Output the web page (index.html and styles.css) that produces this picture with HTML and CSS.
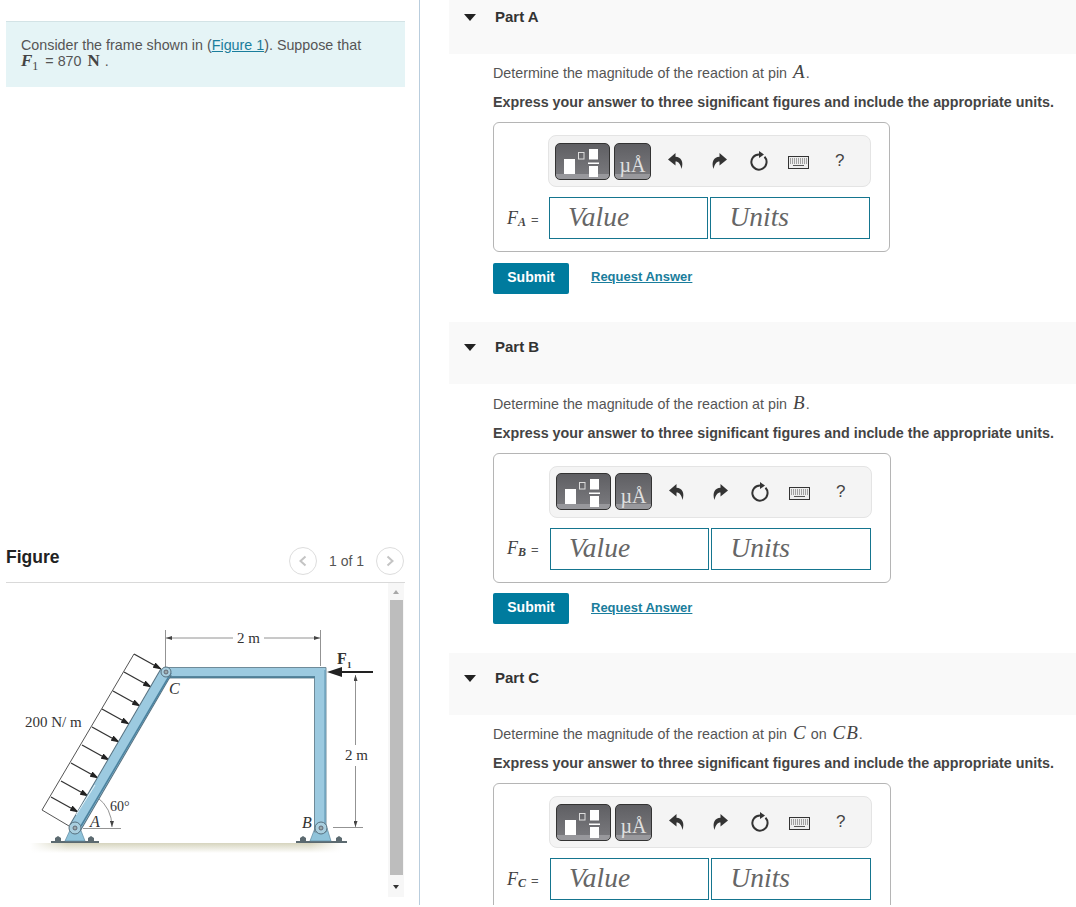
FILE: index.html
```html
<!DOCTYPE html>
<html lang="en">
<head>
    <meta charset="UTF-8">
    <meta name="viewport" content="width=device-width, initial-scale=1.0">
    <title>Frame reactions</title>
    <link rel="stylesheet" href="styles.css">
</head>
<body>

<div class="page">
    <!-- Left column: problem text and figure -->
    <div class="left">
        <div class="intro">
            Consider the frame shown in (<a href="#">Figure 1</a>). Suppose that<br>
            <span class="math">F<sub>1</sub></span> = 870 <span class="unit">N</span> .
        </div>

        <div class="figure-head">
            <h2>Figure</h2>
            <div class="pager">
                <span class="pager-btn">
                    <svg width="10" height="12" viewBox="0 0 10 12"><path d="M7.5 1.5 L2.5 6 L7.5 10.5"/></svg>
                </span>
                <span class="pager-text">1 of 1</span>
                <span class="pager-btn">
                    <svg width="10" height="12" viewBox="0 0 10 12"><path d="M2.5 1.5 L7.5 6 L2.5 10.5"/></svg>
                </span>
            </div>
        </div>

        <div class="figure-panel">
            <!-- viewBox uses page coordinates so it is easy to compare -->
            <svg class="diagram" width="382" height="314" viewBox="6 583 382 314">
                <defs>
                    <linearGradient id="ground" x1="0" y1="0" x2="0" y2="1">
                        <stop offset="0" stop-color="#d6d4be"/>
                        <stop offset="1" stop-color="#ffffff"/>
                    </linearGradient>
                    <linearGradient id="groundFade" x1="0" y1="0" x2="1" y2="0">
                        <stop offset="0" stop-color="#fff" stop-opacity="1"/>
                        <stop offset="0.12" stop-color="#fff" stop-opacity="0"/>
                        <stop offset="0.9" stop-color="#fff" stop-opacity="0"/>
                        <stop offset="1" stop-color="#fff" stop-opacity="1"/>
                    </linearGradient>
                    <marker id="tip" markerWidth="9" markerHeight="6" refX="8" refY="3" orient="auto" markerUnits="userSpaceOnUse">
                        <path d="M0 0 L9 3 L0 6 Z" fill="#222"/>
                    </marker>
                    <marker id="dim" markerWidth="6" markerHeight="4" refX="6" refY="2" orient="auto-start-reverse" markerUnits="userSpaceOnUse">
                        <path d="M0 0 L6 2 L0 4 Z" fill="#444"/>
                    </marker>
                </defs>

                <!-- ground -->
                <rect x="30" y="843" width="312" height="10" fill="url(#ground)"/>
                <rect x="30" y="843" width="312" height="10" fill="url(#groundFade)"/>

                <!-- distributed load -->
                <g stroke="#333" stroke-width="1.3" fill="none" marker-end="url(#tip)">
                    <path d="M134 654 L161 669"/>
                    <path d="M124 672 L151 687"/>
                    <path d="M113 691 L140 706"/>
                    <path d="M102 709 L129 724"/>
                    <path d="M92 727 L119 742"/>
                    <path d="M82 745 L109 760"/>
                    <path d="M71 763 L98 778"/>
                    <path d="M61 781 L88 796"/>
                    <path d="M51 797 L78 812"/>
                </g>
                <path d="M134 654 L42 810 L69 826" stroke="#555" stroke-width="1" fill="none"/>

                <!-- dimensions -->
                <g stroke="#777" stroke-width="0.8" fill="none">
                    <path d="M165.5 630 V667"/>
                    <path d="M320.5 630 V666"/>
                    <path d="M166 638 H233" marker-start="url(#dim)"/>
                    <path d="M264 638 H320" marker-end="url(#dim)"/>
                    <path d="M355.5 675 V745" marker-start="url(#dim)"/>
                    <path d="M355.5 766 V827" marker-end="url(#dim)"/>
                    <path d="M333 827.5 H363"/>
                    <path d="M83 828.5 H121"/>
                    <path d="M97 797 A38 38 0 0 1 112 827" marker-end="url(#dim)"/>
                </g>

                <!-- bases -->
                <g fill="#5c6a70">
                    <path d="M55 841 V838 L58 836 L61 838 V841 Z"/>
                    <path d="M88 841 V838 L91 836 L94 838 V841 Z"/>
                    <path d="M300 841 V838 L303 836 L306 838 V841 Z"/>
                    <path d="M336 841 V838 L339 836 L342 838 V841 Z"/>
                    <rect x="51" y="841" width="48" height="2"/>
                    <rect x="296" y="841" width="51" height="2"/>
                </g>
                <path d="M71 828 H80 L85 841 H65 Z" fill="#8fc3da" stroke="#5f8aa0" stroke-width="0.7"/>
                <path d="M315 828 H327 L331 841 H310 Z" fill="#8fc3da" stroke="#5f8aa0" stroke-width="0.7"/>

                <!-- frame members -->
                <path d="M165 667.5 H326 V832 H314.5 V678 H165 Z" fill="#9ccae0" stroke="#6f8b99" stroke-width="1"/>
                <path d="M165 677 H315" stroke="#3f6f88" stroke-width="1.4" fill="none"/>
                <path d="M325 670 V830" stroke="#6ea3bd" stroke-width="1.4" fill="none"/>
                <path d="M75 828 L166 672" stroke="#56707f" stroke-width="13" fill="none"/>
                <path d="M75 828 L166 672" stroke="#9ccae0" stroke-width="11" fill="none"/>
                <path d="M81 826 L171 673" stroke="#4b83a0" stroke-width="1.6" fill="none"/>
                <path d="M76 815 L95 785" stroke="#e8f4f9" stroke-width="1" fill="none"/>

                <!-- pins -->
                <g fill="#a9cfdf" stroke="#56707f" stroke-width="1">
                    <circle cx="166" cy="672" r="5"/>
                    <circle cx="75" cy="828" r="6"/>
                    <circle cx="321" cy="828" r="6"/>
                </g>
                <g fill="#9aa" stroke="#556" stroke-width="0.8">
                    <circle cx="166" cy="672" r="2"/>
                    <circle cx="75" cy="828" r="2"/>
                    <circle cx="321" cy="828" r="2"/>
                </g>

                <!-- F1 arrow -->
                <path d="M373 672 H340" stroke="#222" stroke-width="2"/>
                <path d="M327 672 L342 667 L342 677 Z" fill="#222"/>

                <!-- labels -->
                <g class="fig-text">
                    <text x="237" y="643">2 m</text>
                    <text x="345" y="760">2 m</text>
                    <text x="25" y="727">200 N/ m</text>
                    <text x="110" y="811" class="small">60°</text>
                    <text x="90" y="827" class="ital">A</text>
                    <text x="302" y="828" class="ital">B</text>
                    <text x="169" y="694" class="ital">C</text>
                    <text x="337" y="664" class="bold">F</text>
                    <text x="347" y="668" class="tiny">1</text>
                </g>
            </svg>

            <!-- fake scrollbar of the figure panel -->
            <div class="scrollbar">
                <span class="arrow-up"></span>
                <span class="thumb"></span>
                <span class="arrow-down"></span>
            </div>
        </div>
    </div>

    <!-- Right column: parts -->
    <div class="right">

        <div class="part">
            <div class="part-head"><span class="caret"></span><span class="part-title">Part A</span></div>
            <div class="part-body">
                <p class="prompt">Determine the magnitude of the reaction at pin <span class="math">A</span>.</p>
                <p class="instruct">Express your answer to three significant figures and include the appropriate units.</p>
                <div class="answer-box">
                    <div class="toolbar">
                        <span class="tool-btn tpl">
                            <svg width="53" height="35" viewBox="0 0 53 35"><rect x="8" y="15" width="11" height="15" fill="#fff"/><rect x="22.5" y="8.5" width="5.5" height="6.5" fill="none" stroke="#ddd"/><rect x="33" y="5" width="9" height="10.5" fill="#fff"/><rect x="32" y="18.5" width="11" height="1.5" fill="#fff"/><rect x="33" y="22" width="9" height="11" fill="#fff"/></svg>
                        </span>
                        <span class="tool-btn units">&micro;&Aring;</span>
                        <svg class="icon undo" width="16" height="16" viewBox="0 0 16 16"><path d="M7.5 0 L0 6.5 L7.5 12.5 V8.5 C10.5 8.5 12.5 11 13.5 16 C16 9 13 3.8 7.5 3.8 Z"/></svg>
                        <svg class="icon redo" width="16" height="16" viewBox="0 0 16 16"><path d="M8.5 0 L16 6.5 L8.5 12.5 V8.5 C5.5 8.5 3.5 11 2.5 16 C0 9 3 3.8 8.5 3.8 Z"/></svg>
                        <svg class="icon reset" width="18" height="20" viewBox="0 0 18 20"><path class="ring" d="M14.5 5.8 A7.6 7.6 0 1 1 9 3.4"/><path d="M9 0 L14 3.6 L9 7 Z"/></svg>
                        <svg class="icon keys" width="21" height="13" viewBox="0 0 21 13"><rect x="0.5" y="0.5" width="20" height="12" fill="#eee" stroke="#333"/><path d="M2 3 H19 M2 5 H19 M2 7 H19" stroke-dasharray="1 1"/><path d="M5 9.5 H16"/></svg>
                        <span class="help">?</span>
                    </div>
                    <div class="answer-row">
                        <span class="answer-label"><span class="math">F<sub>A</sub></span>=</span>
                        <div class="field">Value</div>
                        <div class="field">Units</div>
                    </div>
                </div>
                <div class="actions">
                    <a class="submit" href="#">Submit</a>
                    <a class="request" href="#">Request Answer</a>
                </div>
            </div>
        </div>

        <div class="part">
            <div class="part-head"><span class="caret"></span><span class="part-title">Part B</span></div>
            <div class="part-body">
                <p class="prompt">Determine the magnitude of the reaction at pin <span class="math">B</span>.</p>
                <p class="instruct">Express your answer to three significant figures and include the appropriate units.</p>
                <div class="answer-box wide">
                    <div class="toolbar">
                        <span class="tool-btn tpl">
                            <svg width="53" height="35" viewBox="0 0 53 35"><rect x="8" y="15" width="11" height="15" fill="#fff"/><rect x="22.5" y="8.5" width="5.5" height="6.5" fill="none" stroke="#ddd"/><rect x="33" y="5" width="9" height="10.5" fill="#fff"/><rect x="32" y="18.5" width="11" height="1.5" fill="#fff"/><rect x="33" y="22" width="9" height="11" fill="#fff"/></svg>
                        </span>
                        <span class="tool-btn units">&micro;&Aring;</span>
                        <svg class="icon undo" width="16" height="16" viewBox="0 0 16 16"><path d="M7.5 0 L0 6.5 L7.5 12.5 V8.5 C10.5 8.5 12.5 11 13.5 16 C16 9 13 3.8 7.5 3.8 Z"/></svg>
                        <svg class="icon redo" width="16" height="16" viewBox="0 0 16 16"><path d="M8.5 0 L16 6.5 L8.5 12.5 V8.5 C5.5 8.5 3.5 11 2.5 16 C0 9 3 3.8 8.5 3.8 Z"/></svg>
                        <svg class="icon reset" width="18" height="20" viewBox="0 0 18 20"><path class="ring" d="M14.5 5.8 A7.6 7.6 0 1 1 9 3.4"/><path d="M9 0 L14 3.6 L9 7 Z"/></svg>
                        <svg class="icon keys" width="21" height="13" viewBox="0 0 21 13"><rect x="0.5" y="0.5" width="20" height="12" fill="#eee" stroke="#333"/><path d="M2 3 H19 M2 5 H19 M2 7 H19" stroke-dasharray="1 1"/><path d="M5 9.5 H16"/></svg>
                        <span class="help">?</span>
                    </div>
                    <div class="answer-row">
                        <span class="answer-label"><span class="math">F<sub>B</sub></span>=</span>
                        <div class="field">Value</div>
                        <div class="field">Units</div>
                    </div>
                </div>
                <div class="actions">
                    <a class="submit" href="#">Submit</a>
                    <a class="request" href="#">Request Answer</a>
                </div>
            </div>
        </div>

        <div class="part">
            <div class="part-head"><span class="caret"></span><span class="part-title">Part C</span></div>
            <div class="part-body">
                <p class="prompt">Determine the magnitude of the reaction at pin <span class="math">C</span> on <span class="math">CB</span>.</p>
                <p class="instruct">Express your answer to three significant figures and include the appropriate units.</p>
                <div class="answer-box wide">
                    <div class="toolbar">
                        <span class="tool-btn tpl">
                            <svg width="53" height="35" viewBox="0 0 53 35"><rect x="8" y="15" width="11" height="15" fill="#fff"/><rect x="22.5" y="8.5" width="5.5" height="6.5" fill="none" stroke="#ddd"/><rect x="33" y="5" width="9" height="10.5" fill="#fff"/><rect x="32" y="18.5" width="11" height="1.5" fill="#fff"/><rect x="33" y="22" width="9" height="11" fill="#fff"/></svg>
                        </span>
                        <span class="tool-btn units">&micro;&Aring;</span>
                        <svg class="icon undo" width="16" height="16" viewBox="0 0 16 16"><path d="M7.5 0 L0 6.5 L7.5 12.5 V8.5 C10.5 8.5 12.5 11 13.5 16 C16 9 13 3.8 7.5 3.8 Z"/></svg>
                        <svg class="icon redo" width="16" height="16" viewBox="0 0 16 16"><path d="M8.5 0 L16 6.5 L8.5 12.5 V8.5 C5.5 8.5 3.5 11 2.5 16 C0 9 3 3.8 8.5 3.8 Z"/></svg>
                        <svg class="icon reset" width="18" height="20" viewBox="0 0 18 20"><path class="ring" d="M14.5 5.8 A7.6 7.6 0 1 1 9 3.4"/><path d="M9 0 L14 3.6 L9 7 Z"/></svg>
                        <svg class="icon keys" width="21" height="13" viewBox="0 0 21 13"><rect x="0.5" y="0.5" width="20" height="12" fill="#eee" stroke="#333"/><path d="M2 3 H19 M2 5 H19 M2 7 H19" stroke-dasharray="1 1"/><path d="M5 9.5 H16"/></svg>
                        <span class="help">?</span>
                    </div>
                    <div class="answer-row">
                        <span class="answer-label"><span class="math">F<sub>C</sub></span>=</span>
                        <div class="field">Value</div>
                        <div class="field">Units</div>
                    </div>
                </div>
            </div>
        </div>

    </div>
</div>

</body>
</html>
```

FILE: styles.css
```css
html, body {
    margin: 0;
    padding: 0;
    height: 907px;
    overflow: hidden;
    background-color: white;
}

body {
    font-family: "Liberation Sans", Arial, sans-serif;
    font-size: 14.3px;
    color: #555;
}

.page {
    display: flex;
    height: 905px;
    overflow: hidden;
}

.math {
    font-family: "Liberation Serif", serif;
    font-style: italic;
    font-size: 18px;
    color: #444;
}

.math sub {
    font-size: 12px;
    line-height: 0;
}

/* Left column */
.left {
    flex: none;
    width: 399px;
    border-right: 1px solid #b9cddd;
    padding: 21px 14px 0 6px;
}

.intro {
    height: 66px;
    box-sizing: border-box;
    padding: 16px 15px 0;
    background-color: #e5f4f6;
    border-top: 1px solid #d3e3e6;
    line-height: 15px;
}

.intro a {
    color: #1a7d9c;
}

.intro .math {
    margin-right: 3px;
    font-size: 17px;
    font-weight: bold;
}

.intro .math sub {
    font-style: normal;
    font-weight: normal;
}

.unit {
    font-family: "Liberation Serif", serif;
    font-size: 17px;
    font-weight: bold;
    margin-left: 2px;
    margin-right: 1px;
    color: #444;
}

.figure-head {
    display: flex;
    justify-content: space-between;
    align-items: center;
    height: 36px;
    box-sizing: border-box;
    margin-top: 460px;
    padding-bottom: 8px;
    border-bottom: 1px solid #d9d9d9;
}

.figure-head h2 {
    margin: 0 0 6px;
    font-size: 17.5px;
    color: #222;
}

.pager {
    display: flex;
    align-items: center;
    gap: 12px;
    margin-right: 1px;
    font-size: 14px;
}

.pager-text {
    color: #555;
}

.pager-btn {
    display: flex;
    align-items: center;
    justify-content: center;
    width: 26px;
    height: 26px;
    border: 1px solid #ddd;
    border-radius: 50%;
}

.pager-btn path {
    fill: none;
    stroke: #c4c4c4;
    stroke-width: 2;
}

.figure-panel {
    display: flex;
    height: 314px;
    width: 398px;
}

.diagram {
    display: block;
    flex: none;
}

.fig-text text {
    font-family: "Liberation Serif", serif;
    font-size: 15px;
    fill: #333;
}

.fig-text .small {
    font-size: 14px;
}

.fig-text .ital {
    font-style: italic;
    font-size: 16px;
}

.fig-text .bold {
    font-weight: bold;
    font-size: 16px;
}

.fig-text .tiny {
    font-weight: bold;
    font-size: 9px;
}

.scrollbar {
    display: flex;
    flex-direction: column;
    align-items: center;
    width: 16px;
    background-color: #f7f7f7;
}

.thumb {
    width: 13px;
    height: 275px;
    background-color: #bdbdbd;
}

.arrow-up, .arrow-down {
    width: 0;
    height: 0;
    border-left: 3.5px solid transparent;
    border-right: 3.5px solid transparent;
}

.arrow-up {
    border-bottom: 4px solid #a8a8a8;
    margin: 7px 0 6px;
}

.arrow-down {
    border-top: 4px solid #333;
    margin-top: 10px;
}

/* Right column */
.right {
    flex: 1;
    margin-left: 29px;
    margin-top: -8px;
}

.part {
    height: 330.4px;
}

.part-head {
    display: flex;
    align-items: flex-start;
    height: 62px;
    padding-top: 16px;
    box-sizing: border-box;
    background-color: #f9f9f9;
}

.caret {
    width: 0;
    height: 0;
    margin: 6px 0 0 15px;
    border-left: 6px solid transparent;
    border-right: 6px solid transparent;
    border-top: 7px solid #222;
}

.part-title {
    margin-left: 19px;
    font-size: 15px;
    font-weight: bold;
    color: #333;
}

.part-body {
    padding: 8.3px 0 0 44px;
}

.prompt {
    margin: 0;
    line-height: 20px;
}

.prompt .math {
    margin-left: 2px;
    font-size: 19px;
    letter-spacing: 1px;
}

.instruct {
    margin: 10px 0 0;
    line-height: 18px;
    font-weight: bold;
    color: #444;
}

.answer-box {
    display: inline-block;
    margin-top: 11px;
    padding: 12px 19px 12px 13px;
    border: 1px solid #b5b5b5;
    border-radius: 6px;
    vertical-align: top;
}

.toolbar {
    display: flex;
    align-items: center;
    height: 52px;
    box-sizing: border-box;
    margin-left: 41px;
    margin-right: -1px;
    padding: 0 6px;
    background-color: #f4f4f4;
    border: 1px solid #e4e4e4;
    border-radius: 8px;
}

.wide .toolbar {
    margin-left: 42px;
}

.tool-btn {
    display: flex;
    align-items: center;
    justify-content: center;
    height: 37px;
    box-sizing: border-box;
    border: 1px solid #333;
    border-radius: 5px;
    background: linear-gradient(#5f5f63, #78787c 87%, #98989c 87%);
}

.tpl {
    width: 55px;
    margin-right: 4px;
}

.units {
    width: 37px;
    color: #e0e0e0;
    font-family: "Liberation Serif", serif;
    font-size: 20px;
    padding-top: 9px;
}

.icon path {
    fill: #333;
}

.icon .ring {
    fill: none;
    stroke: #333;
    stroke-width: 2;
}

.undo {
    margin-left: 17px;
}

.redo {
    margin-left: 27px;
}

.reset {
    margin-left: 23px;
}

.keys {
    margin-left: 20px;
    margin-top: 3px;
}

.icon.keys path {
    fill: none;
    stroke: #555;
}

.help {
    margin-left: 26px;
    font-size: 17px;
    color: #444;
}

.answer-row {
    display: flex;
    align-items: center;
    gap: 2px;
    margin-top: 10px;
}

.answer-label {
    flex: none;
    width: 40px;
    font-size: 13px;
    white-space: nowrap;
}

.wide .answer-label {
    width: 41px;
}

.answer-label .math {
    margin-right: 5px;
}

.answer-label sub {
    font-size: 12px;
    font-weight: bold;
    vertical-align: -2px;
}

.field {
    width: 159.4px;
    height: 42px;
    box-sizing: border-box;
    padding-left: 18px;
    border: 1px solid #15758f;
    font-family: "Liberation Serif", serif;
    font-style: italic;
    font-size: 27.5px;
    line-height: 38px;
    color: #666;
}

.actions {
    display: flex;
    align-items: center;
    margin-top: 10.5px;
}

.submit {
    display: block;
    width: 76px;
    height: 31px;
    border-radius: 2px;
    background-color: #007b9e;
    color: white;
    font-weight: bold;
    font-size: 14px;
    line-height: 28px;
    text-align: center;
    text-decoration: none;
}

.request {
    margin-left: 22px;
    margin-bottom: 3px;
    font-size: 13px;
    font-weight: bold;
    color: #1a7d9c;
}
```
